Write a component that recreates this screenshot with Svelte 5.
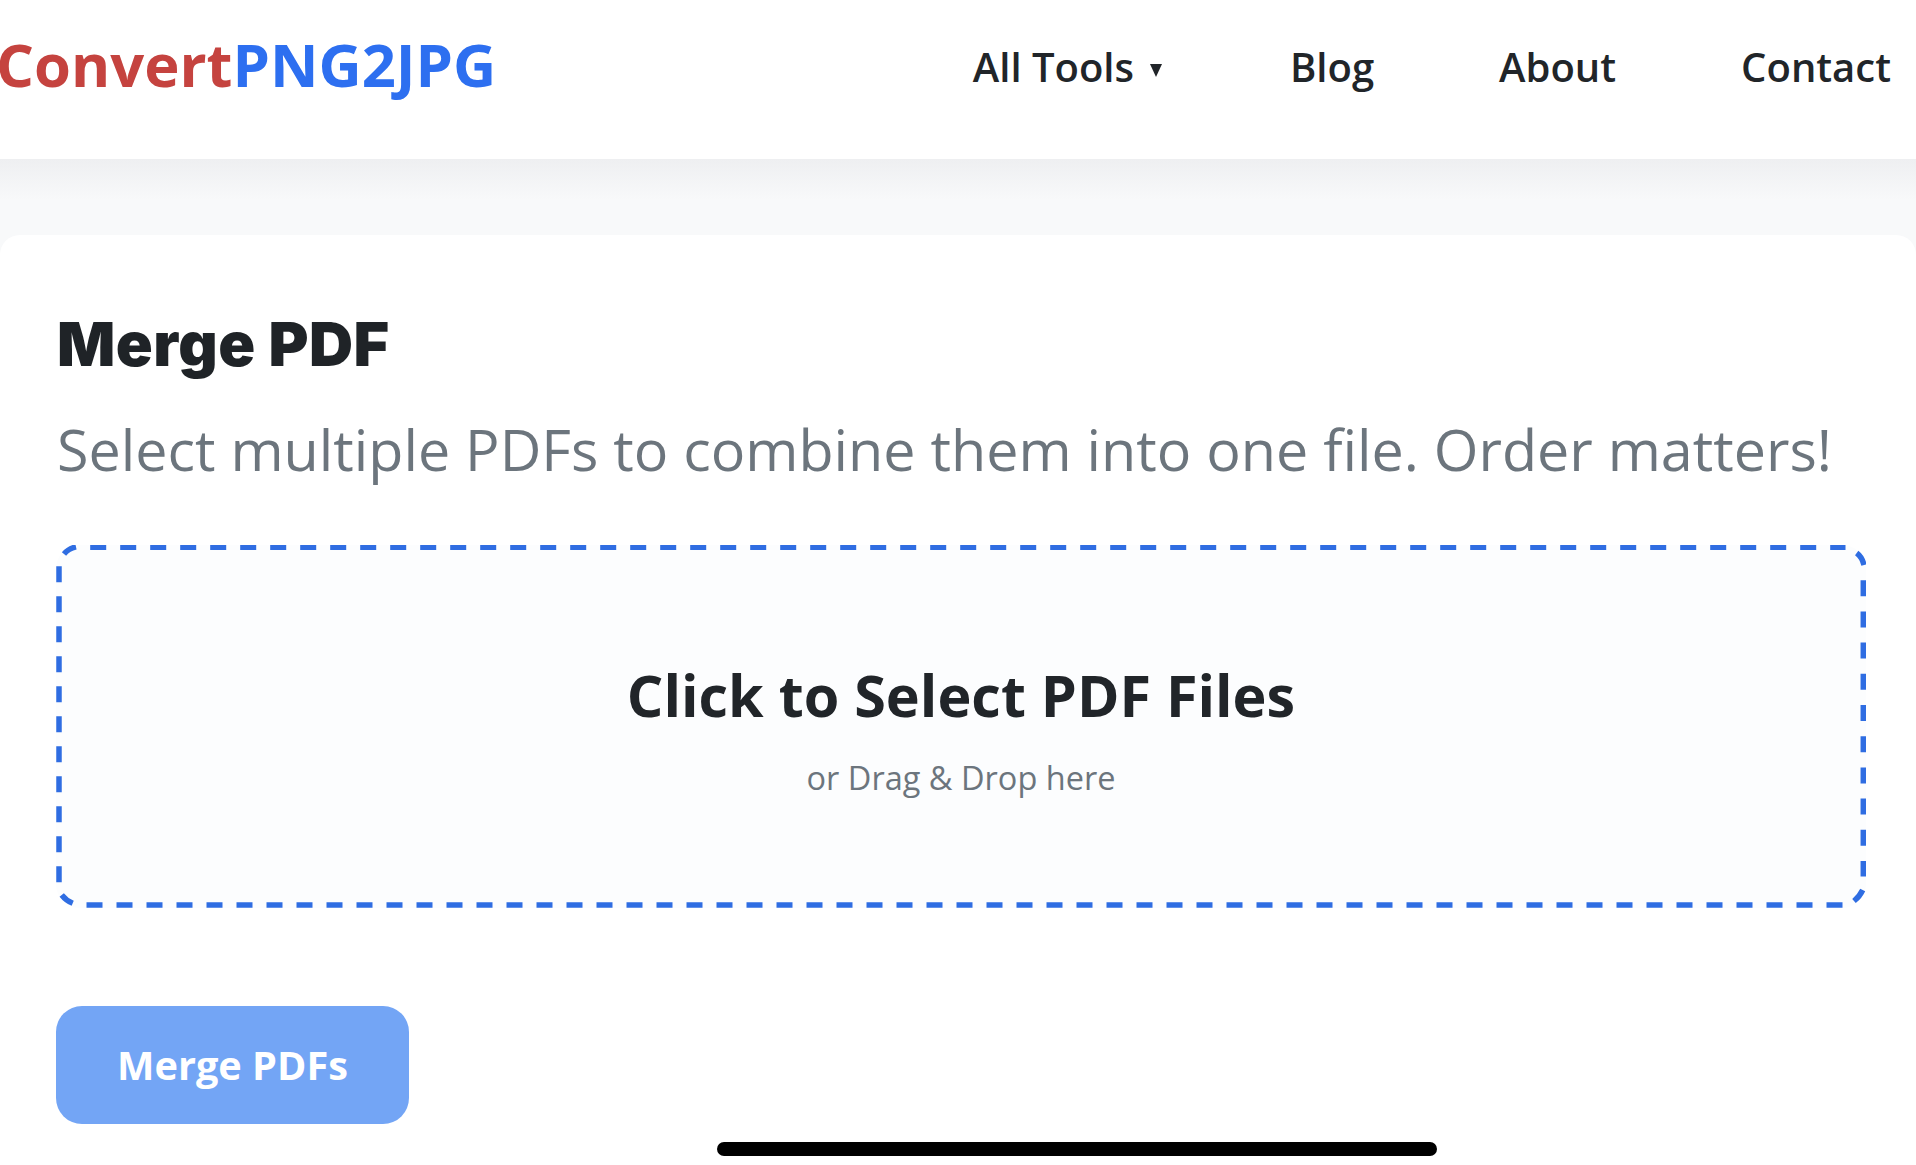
<script>
  const navLinks = [
    { label: 'All Tools', caret: true },
    { label: 'Blog' },
    { label: 'About' },
    { label: 'Contact' },
  ];

  // dashes per side, the way the browser in the screenshot fitted them
  const sides = [
    { d: 'M34.2 2.3H1789.5', gap: 14 },
    { d: 'M1807.3 35.2V331.5', gap: 15.2 },
    { d: 'M1786.5 360H30.2', gap: 14 },
    { d: 'M3 337.2V21.2', gap: 14 },
  ];
  const corners = [
    'M8 9Q12.5 3.5 20 1.9',
    'M1800.7 8Q1806 12 1808 20',
    'M1798 356Q1804 351 1806.7 345',
    'M5.7 350Q10 355.5 16.7 358.3',
  ];
</script>

<div class="page">
  <header class="site-header">
    <a class="logo" href="#top"><span class="logo-red">Convert</span><span class="logo-blue">PNG2JPG</span></a>
    <nav class="nav">
      {#each navLinks as link}
        <a class="nav-link" href="#top">
          {link.label}{#if link.caret}<span class="caret"></span>{/if}
        </a>
      {/each}
    </nav>
  </header>

  <main class="card">
    <h1>Merge PDF</h1>
    <p class="subtitle">Select multiple PDFs to combine them into one file. Order matters!</p>

    <div class="dropzone">
      <svg class="dash" viewBox="0 0 1810 363" aria-hidden="true">
        {#each sides as side}
          <path d={side.d} stroke-dasharray="16 {side.gap}" />
        {/each}
        {#each corners as d}
          <path {d} />
        {/each}
      </svg>
      <h3>Click to Select PDF Files</h3>
      <p>or Drag &amp; Drop here</p>
    </div>

    <button class="merge-btn" disabled>Merge PDFs</button>
  </main>

  <div class="home-indicator"></div>
</div>

<style>
  :global(body) {
    margin: 0;
    background: #f8f9fa;
    overflow: hidden;
  }

  .page {
    position: relative;
    height: 1165px;
    overflow: hidden;
    font-family: "Open Sans", "Liberation Sans", sans-serif;
    color: #212529;
    background: linear-gradient(#eeeff1 159px, #f8f9fa 200px);
  }

  .site-header {
    display: flex;
    justify-content: space-between;
    align-items: center;
    height: 159px;
    padding: 0 25px 26px 0;
    background: #fff;
    box-sizing: border-box;
  }

  .logo {
    margin-left: -4px;
    margin-bottom: 7px;
    font-size: 59.7px;
    font-weight: 700;
    text-decoration: none;
  }

  .logo-red {
    color: #c5433f;
  }

  .logo-blue {
    color: #2d6ff0;
  }

  .nav {
    display: flex;
    gap: 125px;
  }

  .nav-link {
    display: flex;
    align-items: center;
    font-size: 40px;
    font-weight: 600;
    color: #212529;
    text-decoration: none;
  }

  .caret {
    width: 0;
    height: 0;
    margin: 8px 3px 0 16px;
    border-left: 6px solid transparent;
    border-right: 6px solid transparent;
    border-top: 13px solid #212529;
  }

  .card {
    margin-top: 76px;
    height: 930px;
    padding: 70px 50px 0 57px;
    background: #fff;
    border-radius: 20px 20px 0 0;
    box-sizing: border-box;
  }

  h1 {
    margin: 0;
    font-family: Inter, "Liberation Sans", sans-serif;
    font-size: 61px;
    font-weight: 900;
    line-height: 78px;
    letter-spacing: 0.5px;
    color: #1f2327;
  }

  .subtitle {
    margin: 27px 0 0;
    font-size: 57.45px;
    line-height: 78px;
    color: #6c757d;
    white-space: nowrap;
  }

  .dropzone {
    position: relative;
    margin-top: 57px;
    margin-left: -1px;
    height: 363px;
    padding-top: 2px;
    display: flex;
    flex-direction: column;
    align-items: center;
    justify-content: center;
    background: #fcfdfe;
    border-radius: 24px;
    box-sizing: border-box;
  }

  .dash {
    position: absolute;
    inset: 0;
    width: 100%;
    height: 100%;
    fill: none;
    stroke: #2f6de2;
    stroke-width: 5.5;
  }

  .dropzone h3 {
    margin: 0;
    font-size: 57.5px;
    font-weight: 700;
    line-height: 80px;
    color: #212529;
  }

  .dropzone p {
    margin: 21px 0 0;
    font-size: 32.5px;
    line-height: 44px;
    color: #6c757d;
  }

  .merge-btn {
    display: block;
    margin: 98px 0 0 -1px;
    width: 353px;
    height: 118px;
    padding: 0;
    border: none;
    border-radius: 26px;
    background: #73a5f5;
    color: #fff;
    font-family: inherit;
    font-size: 39.7px;
    font-weight: 700;
  }

  .home-indicator {
    position: absolute;
    left: 717px;
    top: 1142px;
    width: 720px;
    height: 14px;
    border-radius: 7px;
    background: #000;
  }
</style>
